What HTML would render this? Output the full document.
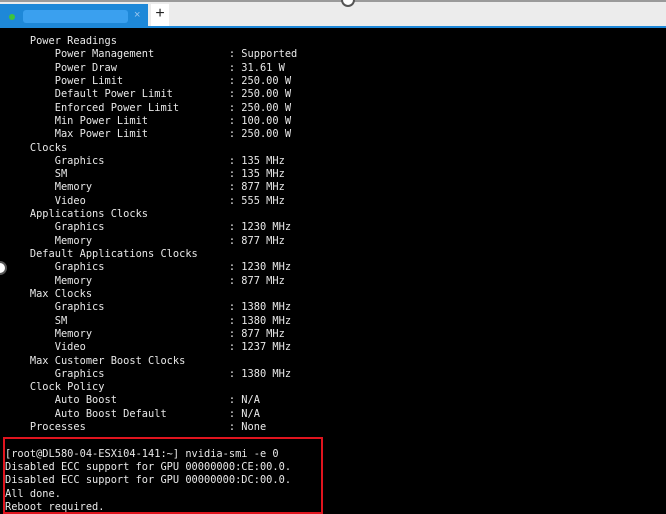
<!DOCTYPE html>
<html><head><style>
body{margin:0;width:666px;height:514px;overflow:hidden;background:#000;position:relative}
#bar{position:absolute;left:0;top:0;width:666px;height:26px;background:#ececec;border-top:2px solid #9a9a9a;box-sizing:border-box}
#line{position:absolute;left:0;top:26px;width:666px;height:2px;background:#1e88d8}
#tab{position:absolute;left:0;top:4px;width:148px;height:24px;background:#1e88d8}
#dot{position:absolute;left:9px;top:10px;width:6px;height:6px;border-radius:3px;background:#3ec43e}
#blur{position:absolute;left:23px;top:6px;width:105px;height:13px;background:#3aa0ef;border-radius:3px}
#x{position:absolute;left:134px;top:5px;color:#9cc8f0;font:11px "Liberation Sans",sans-serif}
#plus{position:absolute;left:151px;top:4px;width:18px;height:22px;background:#fff;font:16px "Liberation Sans",sans-serif;text-align:center;line-height:20px;color:#222}
pre{position:absolute;left:5px;top:35px;margin:0;color:#e8e8e8;font:10.33px/13.31px "DejaVu Sans Mono",monospace}
#red{position:absolute;left:3px;top:437px;width:316px;height:73px;border:2px solid #e0141e}
.h{position:absolute;width:10px;height:10px;border-radius:50%;background:#fff;border:2px solid #555}
</style></head><body>
<div id="bar"></div><div id="line"></div>
<div id="tab"><div id="dot"></div><div id="blur"></div><div id="x">×</div></div>
<div id="plus">+</div>
<div class="h" style="left:341px;top:-7px"></div>
<div class="h" style="left:-7px;top:261px"></div>
<pre>    Power Readings
        Power Management            : Supported
        Power Draw                  : 31.61 W
        Power Limit                 : 250.00 W
        Default Power Limit         : 250.00 W
        Enforced Power Limit        : 250.00 W
        Min Power Limit             : 100.00 W
        Max Power Limit             : 250.00 W
    Clocks
        Graphics                    : 135 MHz
        SM                          : 135 MHz
        Memory                      : 877 MHz
        Video                       : 555 MHz
    Applications Clocks
        Graphics                    : 1230 MHz
        Memory                      : 877 MHz
    Default Applications Clocks
        Graphics                    : 1230 MHz
        Memory                      : 877 MHz
    Max Clocks
        Graphics                    : 1380 MHz
        SM                          : 1380 MHz
        Memory                      : 877 MHz
        Video                       : 1237 MHz
    Max Customer Boost Clocks
        Graphics                    : 1380 MHz
    Clock Policy
        Auto Boost                  : N/A
        Auto Boost Default          : N/A
    Processes                       : None

[root@DL580-04-ESXi04-141:~] nvidia-smi -e 0
Disabled ECC support for GPU 00000000:CE:00.0.
Disabled ECC support for GPU 00000000:DC:00.0.
All done.
Reboot required.</pre>
<div id="red"></div>
</body></html>
